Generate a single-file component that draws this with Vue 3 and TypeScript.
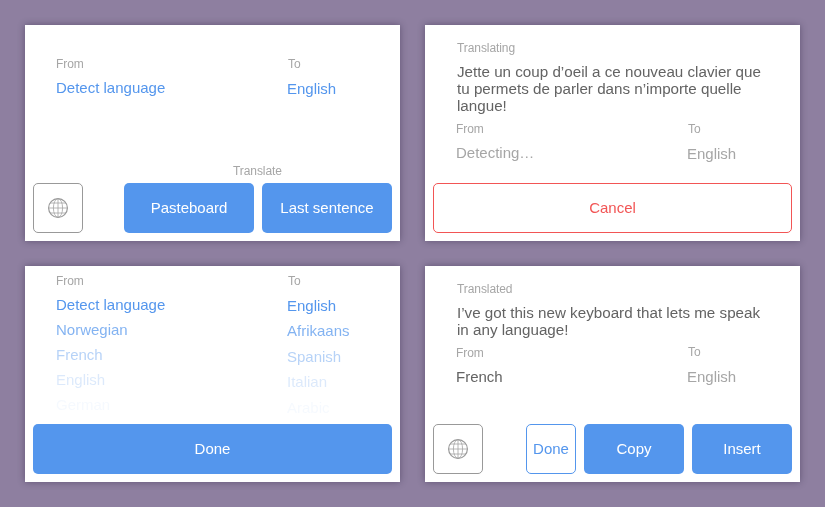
<script setup lang="ts">
const fromLangs = [
  { name: 'Detect language', opacity: 1 },
  { name: 'Norwegian', opacity: 0.72 },
  { name: 'French', opacity: 0.42 },
  { name: 'English', opacity: 0.2 },
  { name: 'German', opacity: 0.05 },
]
const toLangs = [
  { name: 'English', opacity: 1 },
  { name: 'Afrikaans', opacity: 0.72 },
  { name: 'Spanish', opacity: 0.42 },
  { name: 'Italian', opacity: 0.2 },
  { name: 'Arabic', opacity: 0.05 },
]
</script>

<template>
  <div class="page">
    <!-- idle -->
    <section class="card">
      <div class="langs langs--idle">
        <div>
          <div class="label">From</div>
          <div class="value value--blue">Detect language</div>
        </div>
        <div class="to-col">
          <div class="label label--to">To</div>
          <div class="value value--blue">English</div>
        </div>
      </div>
      <div class="translate-label">Translate</div>
      <div class="actions">
        <button class="btn btn--icon" aria-label="Languages">
          <svg class="globe" viewBox="0 0 20 20">
            <circle class="globe__rim" cx="10" cy="10" r="9.4" />
            <ellipse cx="10" cy="10" rx="4.6" ry="9.4" />
            <path d="M10 .6v18.8M.6 10h18.8M2.2 5h15.6M2.2 15h15.6" />
          </svg>
        </button>
        <button class="btn btn--solid btn--wide btn--push">Pasteboard</button>
        <button class="btn btn--solid btn--wide">Last sentence</button>
      </div>
    </section>

    <!-- translating -->
    <section class="card">
      <div class="message message--translating">
        <div class="label">Translating</div>
        <p class="message__text">
          Jette un coup d’oeil a ce nouveau clavier que<br />tu permets de parler dans n’importe quelle<br />langue!
        </p>
      </div>
      <div class="langs langs--after">
        <div>
          <div class="label">From</div>
          <div class="value value--muted">Detecting…</div>
        </div>
        <div class="to-col">
          <div class="label label--to">To</div>
          <div class="value value--muted">English</div>
        </div>
      </div>
      <div class="actions">
        <button class="btn btn--cancel">Cancel</button>
      </div>
    </section>

    <!-- picking languages -->
    <section class="card">
      <div class="langs langs--picker">
        <div>
          <div class="label">From</div>
          <div
            v-for="lang in fromLangs"
            :key="lang.name"
            class="value value--blue value--row"
            :style="{ opacity: lang.opacity }"
          >
            {{ lang.name }}
          </div>
        </div>
        <div class="to-col">
          <div class="label label--to">To</div>
          <div
            v-for="lang in toLangs"
            :key="lang.name"
            class="value value--blue value--row value--row-to"
            :style="{ opacity: lang.opacity }"
          >
            {{ lang.name }}
          </div>
        </div>
      </div>
      <div class="actions">
        <button class="btn btn--solid btn--full">Done</button>
      </div>
    </section>

    <!-- translated -->
    <section class="card">
      <div class="message message--translated">
        <div class="label">Translated</div>
        <p class="message__text">
          I’ve got this new keyboard that lets me speak<br />in any language!
        </p>
      </div>
      <div class="langs langs--after">
        <div>
          <div class="label">From</div>
          <div class="value value--dark">French</div>
        </div>
        <div class="to-col to-col--raised">
          <div class="label label--to">To</div>
          <div class="value value--muted">English</div>
        </div>
      </div>
      <div class="actions">
        <button class="btn btn--icon" aria-label="Languages">
          <svg class="globe" viewBox="0 0 20 20">
            <circle class="globe__rim" cx="10" cy="10" r="9.4" />
            <ellipse cx="10" cy="10" rx="4.6" ry="9.4" />
            <path d="M10 .6v18.8M.6 10h18.8M2.2 5h15.6M2.2 15h15.6" />
          </svg>
        </button>
        <button class="btn btn--outline btn--push">Done</button>
        <button class="btn btn--solid btn--mid">Copy</button>
        <button class="btn btn--solid btn--mid">Insert</button>
      </div>
    </section>
  </div>
</template>

<style scoped>
.page {
  display: grid;
  grid-template-columns: 375px 375px;
  grid-auto-rows: 216px;
  gap: 25px;
  padding: 25px;
  height: 507px;
  box-sizing: border-box;
  background: #8e7fa0;
  font-family: 'Liberation Sans', Arial, sans-serif;
  will-change: transform;
}

.card {
  display: flex;
  flex-direction: column;
  background: #fff;
  box-shadow: 0 0 7px rgba(40, 30, 60, 0.45);
}

.langs {
  display: grid;
  grid-template-columns: 231px 1fr;
  padding-left: 31px;
}

.langs--idle {
  padding-top: 32px;
}

.langs--after {
  padding-top: 8px;
}

.langs--picker {
  padding-top: 8px;
}

.to-col--raised {
  margin-top: -1px;
}

.label {
  font-size: 12px;
  line-height: 14px;
  letter-spacing: -0.08px;
  color: #a6a6a6;
}

.label--to {
  margin-left: 1px;
}

.value {
  margin-top: 8px;
  font-size: 15px;
  line-height: 18px;
}

.to-col .value {
  margin-top: 9px;
}

.value--row {
  height: 18px;
  margin-top: 7px;
}

.value--row:nth-child(2) {
  margin-top: 8px;
}

.to-col .value--row-to {
  margin-top: 7.4px;
}

.to-col .value--row-to:nth-child(2) {
  margin-top: 9px;
}

.value--blue {
  color: #5496ed;
}

.value--muted {
  color: #a6a6a6;
}

.value--dark {
  color: #636363;
}

.message {
  padding-left: 32px;
  padding-right: 20px;
}

.message--translating {
  padding-top: 16px;
}

.message--translated {
  padding-top: 16px;
}

.message__text {
  margin: 8px 0 0;
  font-size: 15.2px;
  line-height: 17px;
  color: #636363;
}

.translate-label {
  margin-top: auto;
  margin-bottom: 5px;
  padding-left: 208px;
  font-size: 12px;
  line-height: 14px;
  letter-spacing: -0.08px;
  color: #a6a6a6;
}

.actions {
  display: flex;
  gap: 8px;
  padding: 0 8px 8px;
}

.card > .langs + .actions,
.card > .message + .langs + .actions {
  margin-top: auto;
}

.btn {
  height: 50px;
  box-sizing: border-box;
  padding: 0 0 2px;
  border: 1px solid transparent;
  border-radius: 5px;
  background: none;
  font-family: inherit;
  font-size: 15px;
}

.btn--icon {
  display: flex;
  align-items: center;
  justify-content: center;
  width: 50px;
  padding: 0 1px 0 0;
  border-color: #999;
}

.btn--push {
  margin-left: auto;
}

.btn--solid {
  background: #5496ed;
  color: #fff;
}

.btn--wide {
  width: 130px;
}

.btn--mid {
  width: 100px;
}

.btn--full {
  flex: 1;
}

.btn--outline {
  width: 50px;
  border-color: #5496ed;
  color: #5496ed;
}

.btn--cancel {
  flex: 1;
  border-color: #f25555;
  color: #f25555;
}

.globe {
  width: 20px;
  height: 20px;
  fill: none;
  stroke: #a3a3a3;
  stroke-width: 0.8;
}

.globe__rim {
  stroke: #999;
  stroke-width: 1.2;
}
</style>
